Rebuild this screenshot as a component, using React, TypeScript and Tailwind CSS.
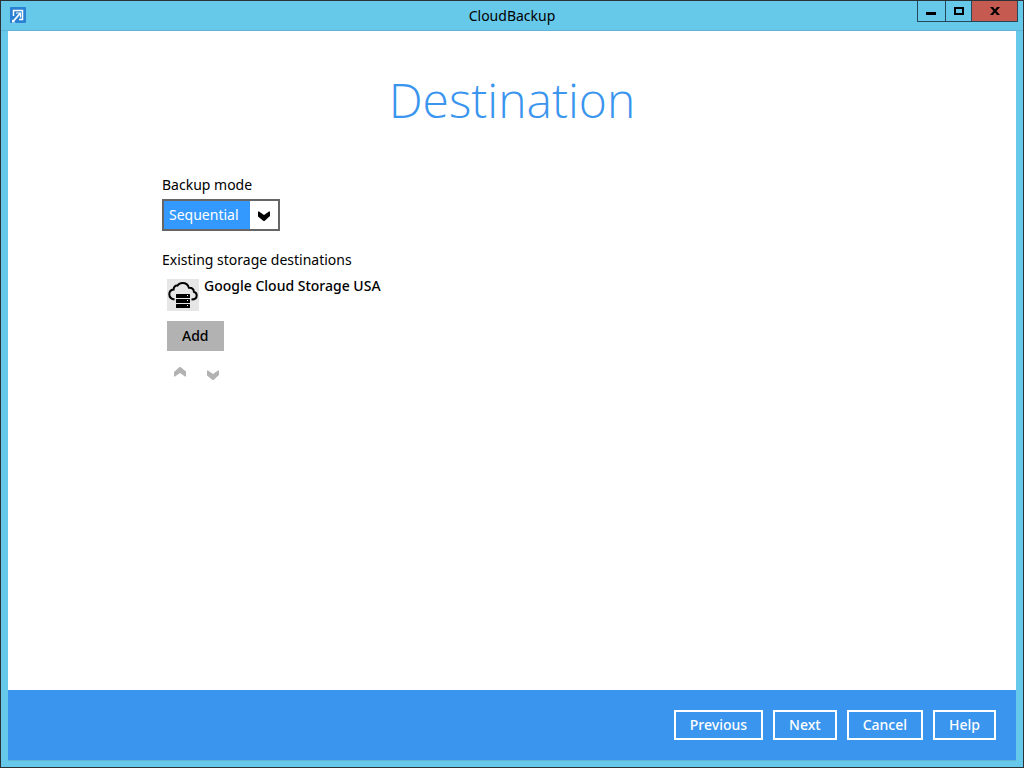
import { useState } from 'react';

const MODES = ['Sequential', 'Concurrent'];
const DESTINATIONS = ['Google Cloud Storage USA'];
const ACTIONS = ['Previous', 'Next', 'Cancel', 'Help'];

function AppLogo() {
  return (
    <svg width="16" height="16" viewBox="0 0 16 16" aria-hidden="true">
      <rect width="16" height="16" rx="1" fill="#2a80d2" />
      <path d="M3.500 9V3.500h9v9H9" fill="none" stroke="#fff" strokeWidth="1.500" />
      <path d="M6 6h4.500v4.500" fill="none" stroke="#fff" strokeWidth="1.200" />
      <path d="M10 6.500L3 14.500" fill="none" stroke="#fff" strokeWidth="1.800" />
      <path d="M2 12.500L5.500 15.500H2z" fill="#fff" />
    </svg>
  );
}

function Chevron({ up = false }: { up?: boolean }) {
  return (
    <svg
      width="12"
      height="10"
      viewBox="0 0 12 10"
      fill="currentColor"
      className={up ? 'rotate-180' : ''}
      aria-hidden="true"
    >
      <path d="M0 0.500h1L6 4l5-3.500h1V5L6.500 10h-1L0 5.500z" />
    </svg>
  );
}

function CloudServerIcon() {
  return (
    <svg width="32" height="32" viewBox="0 0 32 32" className="shrink-0 bg-[#e6e6e6]" aria-hidden="true">
      <path
        d="M7.500 20.500C4.500 20 2.300 18 2.300 15.300c0-2.500 1.800-4.400 4.300-4.700C6.600 8 8.300 6.300 10.400 6.600 11.600 4.900 13.400 4 15.500 4c3.200 0 5.600 2 6.400 4.700 2.700-.1 4.800 1.400 5 4.100 1.800.6 2.800 1.900 2.800 3.600 0 2.300-2 4-5.200 4.100"
        fill="none"
        stroke="#000"
        strokeWidth="2"
      />
      <g fill="#000">
        <rect x="9" y="15" width="14" height="4" rx="0.500" />
        <rect x="9" y="20" width="14" height="4" rx="0.500" />
        <rect x="9" y="25" width="14" height="4" rx="0.500" />
      </g>
      <g fill="#fff">
        <rect x="20" y="16" width="1" height="1" />
        <rect x="20" y="21" width="1" height="1" />
        <rect x="20" y="26" width="1" height="1" />
      </g>
    </svg>
  );
}

function TitleBar() {
  return (
    <header className="relative flex h-[30px] items-center justify-center border-b border-[#62b4d6]">
      <div className="absolute left-[9px] top-1.5">
        <AppLogo />
      </div>
      <h1 className="text-sm">CloudBackup</h1>
      <div className="absolute right-[5px] top-0 flex h-[21px] border-x border-b border-[#24485a]">
        <button aria-label="Minimize" className="flex w-[27px] items-center justify-center">
          <svg width="11" height="10" viewBox="0 0 11 10">
            <path d="M0 6h10v3H0z" />
          </svg>
        </button>
        <button aria-label="Maximize" className="flex w-[27px] items-center justify-center border-x border-[#24485a]">
          <svg width="10" height="8" viewBox="0 0 10 8">
            <path d="M1 1h8v6H1z" fill="none" stroke="#000" strokeWidth="2" />
          </svg>
        </button>
        <button aria-label="Close" className="flex w-[45px] items-center justify-center bg-[#c45a50]">
          <svg width="10" height="8" viewBox="0 0 10 8">
            <path d="M0 0h3l2 2.500L7 0h3L6.500 4 10 8H7L5 5.500 3 8H0l3.500-4z" />
          </svg>
        </button>
      </div>
    </header>
  );
}

export default function App() {
  const [mode, setMode] = useState(MODES[0]);

  return (
    <div className="flex min-h-screen flex-col border border-[#2b3238] bg-[#67c9ea] font-['Noto_Sans',sans-serif] text-sm leading-5 text-black">
      <TitleBar />
      <div className="mx-[7px] mb-1.5 flex flex-1 flex-col bg-white">
        <main className="flex-1">
          <h2 className="pt-9 text-center font-['Open_Sans',sans-serif] text-5xl leading-[66px] font-light text-[#3a95ee]">
            Destination
          </h2>

          <div className="ml-[154px] flex flex-col items-start pt-[42px]">
            <label htmlFor="mode">Backup mode</label>
            <div className="relative mt-1 border-2 border-[#666]">
              <select
                id="mode"
                value={mode}
                onChange={(e) => setMode(e.target.value)}
                className="block h-7 w-[114px] appearance-none bg-[#3399ff] pr-8 pl-[5px] text-white outline-none"
              >
                {MODES.map((m) => (
                  <option key={m}>{m}</option>
                ))}
              </select>
              <span className="pointer-events-none absolute inset-y-0 right-0 flex w-7 items-center justify-center bg-white pt-0.5">
                <Chevron />
              </span>
            </div>

            <h3 className="mt-[19px]">Existing storage destinations</h3>
            <ul className="ml-[5px]">
              {DESTINATIONS.map((name) => (
                <li key={name} className="mt-[9px] flex gap-[5px]">
                  <CloudServerIcon />
                  <span className="-mt-[3px] font-medium">{name}</span>
                </li>
              ))}
            </ul>
            <button className="mt-2.5 ml-[5px] h-[30px] bg-[#b2b2b2] px-[15px] font-medium">Add</button>
            <div className="mt-4 ml-3 flex items-start gap-[21px] text-[#b2b2b2]">
              <button aria-label="Move up">
                <Chevron up />
              </button>
              <button aria-label="Move down" className="pt-[3px]">
                <Chevron />
              </button>
            </div>
          </div>
        </main>

        <footer className="flex h-[71px] items-center justify-end gap-2.5 border-b border-[#62b4d6] bg-[#3a95ee] px-5">
          {ACTIONS.map((label) => (
            <button key={label} className="h-[30px] border-2 border-white px-3.5 leading-[26px] font-medium text-white">
              {label}
            </button>
          ))}
        </footer>
      </div>
    </div>
  );
}
